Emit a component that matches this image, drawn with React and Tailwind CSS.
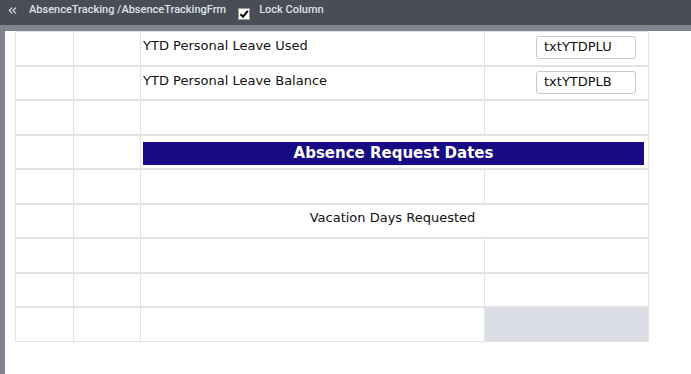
import { ChevronsLeft } from 'lucide-react';

const rows = [
  { label: 'YTD Personal Leave Used', input: 'txtYTDPLU' },
  { label: 'YTD Personal Leave Balance', input: 'txtYTDPLB' },
  {},
  { banner: 'Absence Request Dates' },
  {},
  { center: 'Vacation Days Requested' },
  {},
  {},
  { shaded: true },
];

function Row({ row }) {
  const cell = 'border-l border-t border-b border-[#e2e2e2]';
  return (
    <div className="flex h-[34.5px]">
      <div className={`w-[58px] shrink-0 ${cell}`} />
      <div className={`w-[67px] shrink-0 ${cell}`} />
      {row.banner ? (
        <div className={`w-[509px] shrink-0 border-r ${cell} pl-[2px] pr-[4px] pt-[6px]`}>
          <div className="h-[23px] bg-[#170a84] text-white font-bold text-[15px] flex items-center justify-center">
            {row.banner}
          </div>
        </div>
      ) : row.center ? (
        <div className={`w-[509px] shrink-0 border-r ${cell} pt-[3px] pr-[4px] text-center text-[13px] text-[#111]`}>
          {row.center}
        </div>
      ) : (
        <>
          <div className={`w-[344px] shrink-0 ${cell} pl-[2px] pt-[4px] text-[13px] text-[#111]`}>
            {row.label}
          </div>
          <div className={`w-[165px] shrink-0 border-r ${cell} ${row.shaded ? 'bg-[#dadde4]' : ''} flex justify-end pr-[12px] pt-[4px]`}>
            {row.input && (
              <div className="w-[100px] h-[23px] border border-[#c8c8c8] rounded-[3px] bg-white pl-[7px] text-[13px] text-[#111] leading-[20px]">
                {row.input}
              </div>
            )}
          </div>
        </>
      )}
    </div>
  );
}

export default function App() {
  return (
    <div className="w-[691px] h-[374px] overflow-hidden bg-white flex flex-col" style={{ fontFamily: '"DejaVu Sans", Verdana, sans-serif' }}>
      <div className="h-[25px] shrink-0 bg-[#4a4d55] flex items-center pb-[4px] text-[11px] font-medium text-[#dde2ea]" style={{ fontFamily: 'Roboto, sans-serif' }}>
        <ChevronsLeft size={13} strokeWidth={2} className="ml-[6px]" />
        <span className="ml-[10px]">AbsenceTracking /AbsenceTrackingFrm</span>
        <span className="ml-[12px] mt-[6px] w-[12px] h-[12px] bg-white border border-[#999] flex items-center justify-center">
          <svg width="10" height="10" viewBox="0 0 10 10">
            <path d="M1.5 5.2 L4 7.8 L8.8 1.8" stroke="#000" strokeWidth="2" fill="none" />
          </svg>
        </span>
        <span className="ml-[9px]">Lock Column</span>
      </div>
      <div className="h-[6px] shrink-0 bg-[#80848c]" />
      <div className="flex flex-1">
        <div className="w-[5px] bg-[#80848c]" />
        <div className="pl-[10px]">
          {rows.map((r, i) => (
            <Row key={i} row={r} />
          ))}
        </div>
      </div>
    </div>
  );
}
